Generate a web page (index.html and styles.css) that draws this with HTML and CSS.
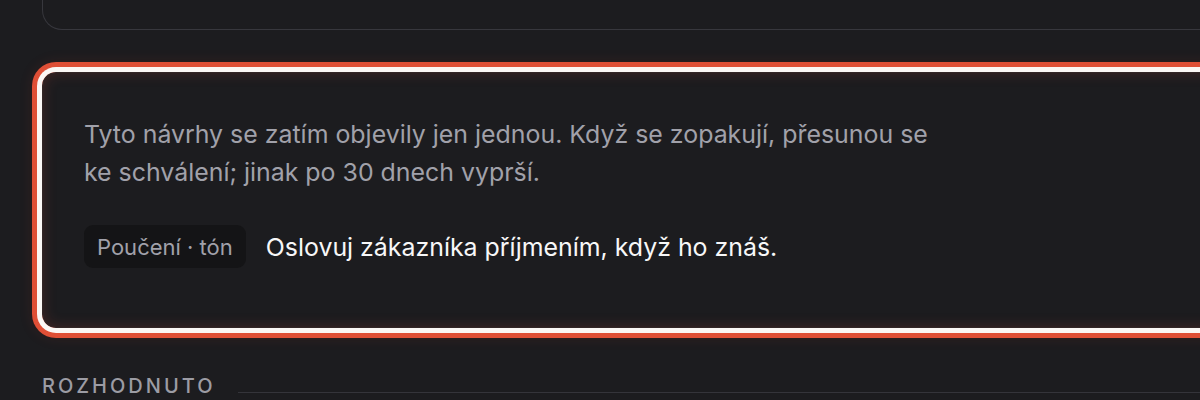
FILE: index.html
```html
<!DOCTYPE html>
<html lang="cs">
<head>
<meta charset="utf-8">
<link rel="stylesheet" href="styles.css">
</head>
<body>
<div class="page">
  <div class="prev-card"></div>
  <section class="pending-card">
    <p class="note">Tyto návrhy se zatím objevily jen jednou. Když se zopakují, přesunou se ke schválení; jinak po 30 dnech vyprší.</p>
    <div class="item">
      <span class="tag">Poučení · tón</span>
      <span class="item-text">Oslovuj zákazníka příjmením, když ho znáš.</span>
    </div>
  </section>
  <div class="section-head">
    <span class="section-title">ROZHODNUTO</span>
    <span class="section-line"></span>
  </div>
</div>
</body>
</html>
```

FILE: styles.css
```css
html, body {
  margin: 0;
  padding: 0;
  background: #1c1c1f;
  overflow: hidden;
  height: 400px;
}
body {
  font-family: Inter, "Noto Sans", sans-serif;
  color: #f4f4f5;
}
.page {
  width: 1300px;
  padding-left: 42px;
  box-sizing: border-box;
}
.prev-card {
  height: 29px;
  border: 1px solid #37373d;
  border-top: none;
  border-radius: 0 0 20px 20px;
}
.pending-card {
  margin-top: 42px;
  height: 256px;
  box-sizing: border-box;
  border: 1px solid rgba(255, 130, 110, 0.10);
  border-radius: 14px;
  padding: 42px 41px 0;
  box-shadow:
    0 0 0 5px #fbf7f5,
    0 0 0 10px #df4f36,
    0 0 14px 10px rgba(200, 60, 40, 0.12),
    inset 0 0 14px rgba(200, 70, 55, 0.22);
}
.note {
  margin: 0;
  max-width: 866px;
  font-size: 24.9px;
  line-height: 38px;
  color: #a1a1aa;
}
.item {
  display: flex;
  align-items: center;
  gap: 20px;
  margin-top: 34px;
}
.tag {
  display: inline-flex;
  align-items: center;
  height: 43px;
  padding: 0 13px;
  border-radius: 9px;
  background: #141416;
  color: #a1a1aa;
  font-size: 22px;
}
.item-text {
  font-size: 24.9px;
  color: #f7f7f8;
}
.section-head {
  display: flex;
  align-items: center;
  gap: 23px;
  margin-top: 46px;
}
.section-title {
  font-size: 20px;
  font-weight: 500;
  letter-spacing: 3px;
  color: #9c9ca4;
  line-height: 24px;
}
.section-line {
  flex: 1;
  height: 1px;
  background: #34343a;
  align-self: flex-end;
  margin-bottom: 5px;
}
```
